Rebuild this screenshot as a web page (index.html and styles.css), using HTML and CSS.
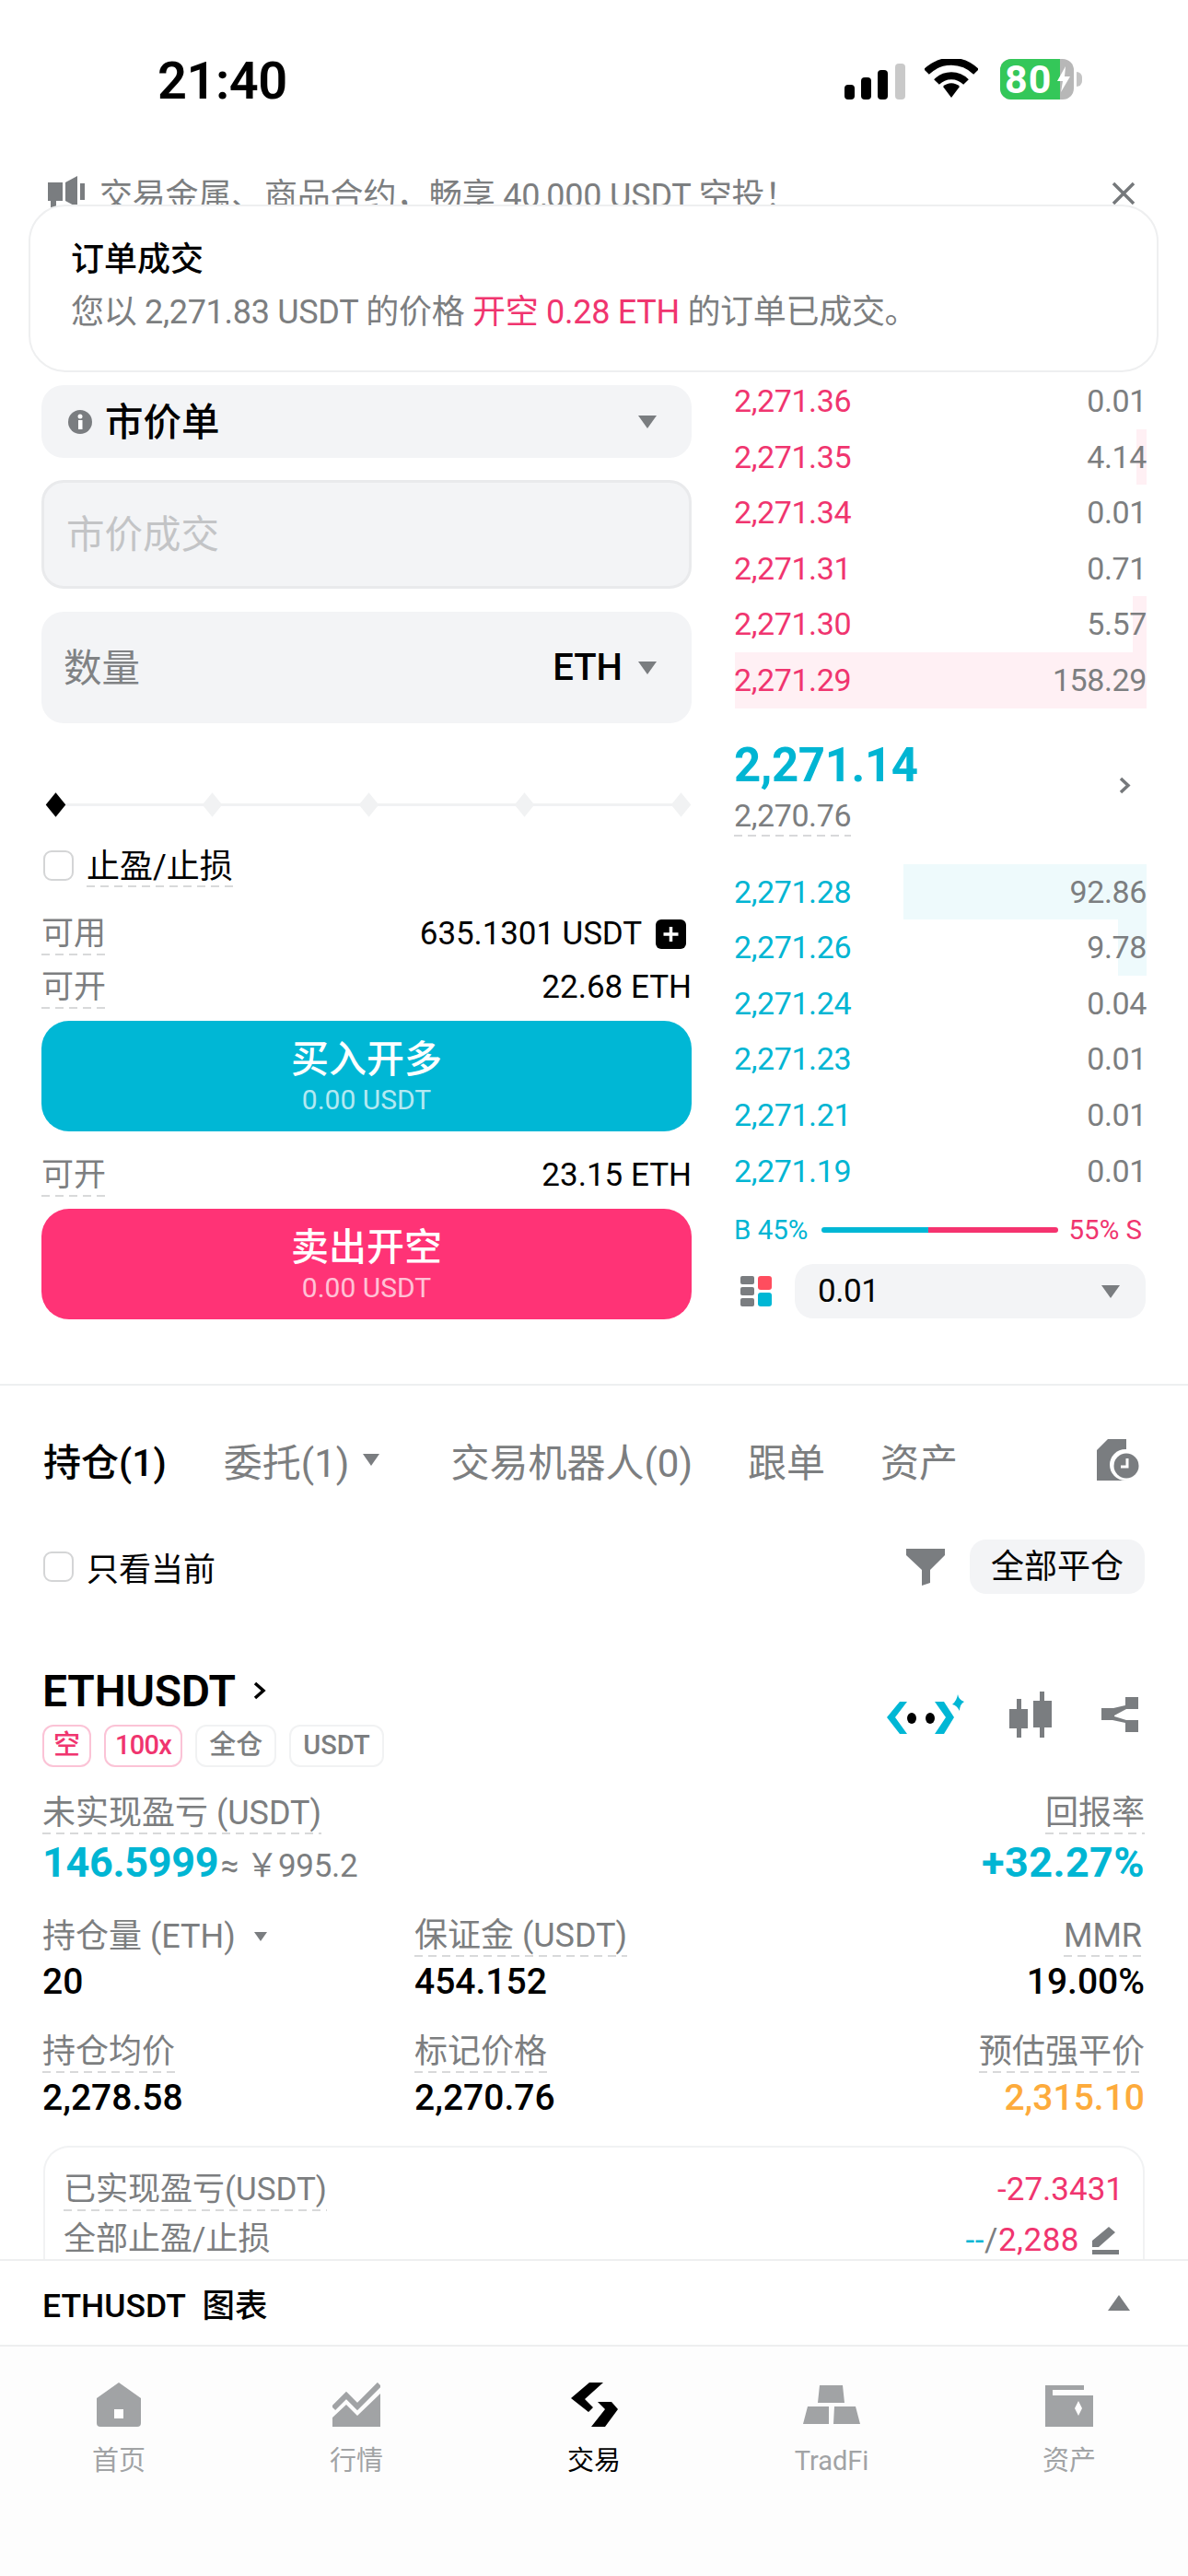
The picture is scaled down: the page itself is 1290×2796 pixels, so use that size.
FILE: index.html
```html
<!DOCTYPE html>
<html lang="zh-CN">
<head>
    <meta charset="UTF-8">
    <meta name="viewport" content="width=device-width, initial-scale=1.0">
    <title>ETHUSDT</title>
    <link rel="stylesheet" href="styles.css">
</head>
<body>
<div class="page">
    <div class="status">
        <div class="clock">21:40</div>
        <div class="status-icons">
            <svg class="signal" width="66" height="39" viewBox="0 0 66 39"><rect x="0" y="23" width="11" height="16" rx="4"/><rect x="18" y="15" width="11" height="24" rx="4"/><rect x="36" y="7" width="11" height="32" rx="4"/><rect x="55" y="0" width="11" height="39" rx="4" fill="#c9c9c9"/></svg>
            <svg class="wifi" width="58" height="42" viewBox="0 0 58 42"><path d="M2 14C17 -1 41 -1 56 14" fill="none" stroke="#000" stroke-width="8"/><path d="M13 25C22 16 36 16 45 25" fill="none" stroke="#000" stroke-width="8"/><path d="M20 30C25 25 33 25 38 30L29 42Z"/></svg>
            <div class="battery"><div class="battery-fill">80</div><svg class="bolt" width="14" height="28" viewBox="0 0 14 28"><path d="M9 0L0 16H6L4 28L14 11H8Z" fill="#fff"/></svg></div>
            <div class="battery-nub"></div>
        </div>
    </div>

    <div class="notice">
        <svg class="speaker" width="40" height="36" viewBox="0 0 40 36"><path d="M0 7H16V27H9V36H3V27H0ZM19 7L32 0V34L19 27ZM35 8H40V26H35Z" fill="#7a7d80"/></svg>
        <span class="notice-text">交易金属、商品合约，畅享 40,000 USDT 空投！</span>
        <svg class="close" width="26" height="26" viewBox="0 0 26 26"><path d="M2 2L24 24M24 2L2 24" stroke="#75787b" stroke-width="3.5"/></svg>
    </div>

    <div class="toast">
        <div class="toast-title">订单成交</div>
        <div class="toast-body">您以 2,271.83 USDT 的价格 <span class="pink">开空 0.28 ETH</span> 的订单已成交。</div>
    </div>

    <div class="trade">
        <div class="form">
            <div class="field field-select">
                <svg width="26" height="26" viewBox="0 0 26 26"><circle cx="13" cy="13" r="13" fill="#7a7d80"/><rect x="11" y="11" width="4.5" height="10" fill="#fff"/><circle cx="13" cy="7" r="2.5" fill="#fff"/></svg>
                <span class="select-name">市价单</span>
                <i class="caret caret-end"></i>
            </div>
            <div class="field field-input"><span class="cjk-up">市价成交</span></div>
            <div class="field field-qty">
                <span class="cjk-up">数量</span>
                <span class="unit">ETH</span>
                <i class="caret"></i>
            </div>
            <div class="slider">
                <i class="dot dot-on"></i><i class="dot"></i><i class="dot"></i><i class="dot"></i><i class="dot"></i>
            </div>
            <div class="check-row">
                <i class="check"></i>
                <span class="dash">止盈/止损</span>
            </div>
            <div class="info-row info-first">
                <span class="dash grey">可用</span>
                <span class="info-val">635.1301 USDT<svg class="plus" width="33" height="32" viewBox="0 0 33 32"><rect width="33" height="32" rx="6"/><path d="M16.500 8V24M8.500 16H24.500" stroke="#fff" stroke-width="3.500"/></svg></span>
            </div>
            <div class="info-row">
                <span class="dash grey">可开</span>
                <span>22.68 ETH</span>
            </div>
            <div class="btn btn-buy"><b>买入开多</b><small>0.00 USDT</small></div>
            <div class="info-row info-second">
                <span class="dash grey">可开</span>
                <span>23.15 ETH</span>
            </div>
            <div class="btn btn-sell"><b>卖出开空</b><small>0.00 USDT</small></div>
        </div>

        <div class="book">
            <div class="book-side asks">
                <div class="level"><span>2,271.36</span><span class="size">0.01</span></div>
                <div class="level"><i class="depth" style="width:11px"></i><span>2,271.35</span><span class="size">4.14</span></div>
                <div class="level"><span>2,271.34</span><span class="size">0.01</span></div>
                <div class="level"><span>2,271.31</span><span class="size">0.71</span></div>
                <div class="level"><i class="depth" style="width:15px"></i><span>2,271.30</span><span class="size">5.57</span></div>
                <div class="level"><i class="depth" style="width:447px"></i><span>2,271.29</span><span class="size">158.29</span></div>
            </div>
            <div class="mid">
                <div class="mid-price">2,271.14</div>
                <div class="mid-mark"><span class="dash">2,270.76</span></div>
                <svg class="mid-arrow" width="13" height="19" viewBox="0 0 13 19"><path d="M2 2L10 9.500L2 17" fill="none" stroke="#75787b" stroke-width="3.500"/></svg>
            </div>
            <div class="book-side bids">
                <div class="level"><i class="depth" style="width:264px"></i><span>2,271.28</span><span class="size">92.86</span></div>
                <div class="level"><i class="depth" style="width:31px"></i><span>2,271.26</span><span class="size">9.78</span></div>
                <div class="level"><span>2,271.24</span><span class="size">0.04</span></div>
                <div class="level"><span>2,271.23</span><span class="size">0.01</span></div>
                <div class="level"><span>2,271.21</span><span class="size">0.01</span></div>
                <div class="level"><span>2,271.19</span><span class="size">0.01</span></div>
            </div>
            <div class="ratio">
                <span class="cyan">B 45%</span>
                <div class="ratio-bar"><i class="ratio-buy" style="width:45%"></i><i class="ratio-sell"></i></div>
                <span class="pink">55% S</span>
            </div>
            <div class="depth-row">
                <svg width="34" height="33" viewBox="0 0 34 33"><rect x="0" y="0" width="15" height="9" rx="2" fill="#7a7d80"/><rect x="0" y="12" width="15" height="9" rx="2" fill="#7a7d80"/><rect x="0" y="24" width="15" height="9" rx="2" fill="#7a7d80"/><rect x="19" y="0" width="15" height="15" rx="3" fill="#ff4d5e"/><rect x="19" y="18" width="15" height="15" rx="3" fill="#00b7d5"/></svg>
                <div class="depth-select"><span>0.01</span><i class="caret"></i></div>
            </div>
        </div>
    </div>

    <div class="positions">
        <div class="tabs">
            <span class="tab tab-on">持仓(1)</span>
            <span class="tab tab-caret">委托(1)<i class="caret caret-sm"></i></span>
            <span class="tab">交易机器人(0)</span>
            <span class="tab">跟单</span>
            <span class="tab">资产</span>
            <svg class="history" width="48" height="45" viewBox="0 0 48 45"><path d="M12 0H32V45H0V12Z" fill="#7a7d80"/><circle cx="31" cy="28" r="17" fill="#fff"/><circle cx="32" cy="29" r="13.500" fill="#7a7d80"/><path d="M33 21V30H26" fill="none" stroke="#fff" stroke-width="3"/></svg>
        </div>
        <div class="filter-row">
            <i class="check"></i>
            <span class="filter-label">只看当前</span>
            <svg class="funnel" width="42" height="40" viewBox="0 0 42 40"><path d="M0 0H42V7L26 23V37L17 40V23L0 7Z" fill="#7a7d80"/></svg>
            <span class="close-all">全部平仓</span>
        </div>

        <div class="symbol-row">
            <span class="symbol">ETHUSDT</span>
            <svg class="symbol-arrow" width="14" height="20" viewBox="0 0 14 20"><path d="M2 2L11 10L2 18" fill="none" stroke="#000" stroke-width="3.500"/></svg>
            <div class="symbol-tools">
                <svg class="tool-robot" width="89" height="44" viewBox="0 0 89 44"><path d="M0 25L14 8H22L9 25L22 43H14Z" fill="#00b7d5"/><path d="M52 8H62L73 25L62 43H52L64 25Z" fill="#00b7d5"/><ellipse cx="27" cy="26" rx="5" ry="6"/><ellipse cx="47" cy="26" rx="5" ry="6"/><path d="M77 0Q78 6 84 8Q79 11 79 18Q76 12 71 11Q76 7 77 0Z" fill="#00b7d5"/></svg>
                <svg width="46" height="50" viewBox="0 0 46 50"><path d="M8 8H13V19H20V40H13V50H8V40H0V19H8ZM33 0H38V10H46V39H38V50H33V39H26V10H33Z" fill="#7a7d80"/></svg>
                <svg width="40" height="38" viewBox="0 0 40 38"><path d="M26 0H40V13H27L14 20V18V21L27 25H40V38H26V28L12 25H0V12H13L26 9Z" fill="#7a7d80"/></svg>
            </div>
        </div>
        <div class="tags">
            <span class="tag tag-pink">空</span>
            <span class="tag tag-pink tag-tight">100x</span>
            <span class="tag">全仓</span>
            <span class="tag">USDT</span>
        </div>

        <div class="pnl-row">
            <div class="metric">
                <span class="lbl dash">未实现盈亏 (USDT)</span>
                <div class="pnl-val"><span class="cyan big">146.5999</span><span class="approx">≈ ￥995.2</span></div>
            </div>
            <div class="metric metric-end">
                <span class="lbl dash">回报率</span>
                <div class="pnl-val"><span class="cyan big">+32.27%</span></div>
            </div>
        </div>
        <div class="metrics">
            <div class="metric">
                <span class="lbl">持仓量 (ETH)<i class="caret caret-xs"></i></span>
                <div class="val">20</div>
            </div>
            <div class="metric">
                <span class="lbl dash">保证金 (USDT)</span>
                <div class="val">454.152</div>
            </div>
            <div class="metric metric-end">
                <span class="lbl dash lbl-inset">MMR</span>
                <div class="val">19.00%</div>
            </div>
            <div class="metric">
                <span class="lbl dash">持仓均价</span>
                <div class="val">2,278.58</div>
            </div>
            <div class="metric">
                <span class="lbl dash">标记价格</span>
                <div class="val">2,270.76</div>
            </div>
            <div class="metric metric-end">
                <span class="lbl dash">预估强平价</span>
                <div class="val orange">2,315.10</div>
            </div>
        </div>

        <div class="tpsl-card">
            <div class="card-row">
                <span class="lbl dash">已实现盈亏(USDT)</span>
                <span class="pink">-27.3431</span>
            </div>
            <div class="card-row">
                <span class="lbl">全部止盈/止损</span>
                <span class="tp-val"><span class="cyan">--</span><span class="grey">/</span><span class="pink">2,288</span>
                    <svg width="35" height="30" viewBox="0 0 35 30"><path d="M22 0L29 6L11 22H4V15ZM4 25H33V30H4Z" fill="#7a7d80"/></svg>
                </span>
            </div>
        </div>
    </div>

    <div class="chart-bar">
        <span>ETHUSDT&nbsp; 图表</span>
        <i class="caret-up"></i>
    </div>

    <div class="nav">
        <div class="nav-item">
            <svg width="48" height="48" viewBox="0 0 48 48"><path d="M24 0L48 17V44Q48 48 44 48H4Q0 48 0 44V17Z" fill="#a1a3a5"/><rect x="19" y="29" width="10" height="10" fill="#fff"/></svg>
            <span>首页</span>
        </div>
        <div class="nav-item">
            <svg width="52" height="48" viewBox="0 0 52 48"><path d="M1 28L15 14L27 26L51 2" fill="none" stroke="#a1a3a5" stroke-width="6"/><path d="M0 38L15 24L27 36L52 12V48H0Z" fill="#a1a3a5"/></svg>
            <span>行情</span>
        </div>
        <div class="nav-item nav-on">
            <svg width="52" height="48" viewBox="0 0 52 48"><path d="M21 0H36L16 18L25 27L20 32L1 17ZM30 21H45L52 29L38 48H23L38 29Z"/></svg>
            <span>交易</span>
        </div>
        <div class="nav-item">
            <svg width="62" height="48" viewBox="0 0 62 48"><path d="M18 3H43L45 22H16ZM5 26H28V45H0ZM34 26H57L62 45H33Z" fill="#a1a3a5"/></svg>
            <span>TradFi</span>
        </div>
        <div class="nav-item">
            <svg width="52" height="48" viewBox="0 0 52 48"><path d="M0 3H42V8H8V14H52V48H0Z" fill="#a1a3a5"/><path d="M36 20L40 28L36 36L32 28Z" fill="#fff"/></svg>
            <span>资产</span>
        </div>
    </div>
</div>
</body>
</html>
```

FILE: styles.css
```css
* {
    box-sizing: border-box;
}

body {
    margin: 0;
    font-family: Roboto, "Noto Sans CJK SC", sans-serif;
    color: #000;
    background: #fff;
}

i {
    display: block;
    font-style: normal;
}

.page {
    position: relative;
    width: 1290px;
    height: 2796px;
    overflow: hidden;
    background: #fff;
}

.pink {
    color: #f0356f;
}

.cyan {
    color: #00b5d3;
}

.grey {
    color: #7c7e80;
}

.orange {
    color: #fdab3c;
}

/* dashed underline under labels, longer dashes than css dashed gives */
.dash {
    display: inline-block;
    background: repeating-linear-gradient(90deg, #d8d9da 0 9px, transparent 9px 15px) left bottom / 100% 2px no-repeat;
}

.caret {
    width: 0;
    height: 0;
    border-left: 10px solid transparent;
    border-right: 10px solid transparent;
    border-top: 14px solid #7a7d80;
}

.caret-sm {
    border-left-width: 9px;
    border-right-width: 9px;
    border-top-width: 13px;
    margin-left: 15px;
}

.caret-xs {
    border-left-width: 7px;
    border-right-width: 7px;
    border-top-width: 10px;
    margin-left: 20px;
}

.caret-end {
    margin-left: auto;
}

/* status bar */
.status {
    display: flex;
    justify-content: space-between;
    height: 180px;
    padding: 64px 115px 0 171px;
}

.clock {
    font-size: 56px;
    line-height: 48px;
    font-weight: 600;
    letter-spacing: -0.5px;
}

.status-icons {
    display: flex;
    align-items: flex-start;
    height: 44px;
}

.signal {
    margin-top: 5px;
}

.wifi {
    margin: 0 0 0 21px;
}

.battery {
    position: relative;
    display: flex;
    align-items: center;
    width: 80px;
    height: 44px;
    margin-left: 24px;
    border-radius: 12px;
    background: #b7b7b7;
}

.battery-fill {
    width: 65px;
    height: 44px;
    padding-left: 5px;
    border-radius: 12px 0 0 12px;
    background: #34c759;
    color: #fff;
    font-size: 43px;
    line-height: 44px;
    font-weight: 700;
    letter-spacing: 1px;
}

.bolt {
    position: absolute;
    left: 62px;
    top: 8px;
}

.battery-nub {
    width: 6px;
    height: 16px;
    margin: 14px 0 0 3px;
    border-radius: 0 6px 6px 0;
    background: #c4c4c4;
}

/* notice line, the toast lies over its lower half */
.notice {
    display: flex;
    align-items: flex-start;
    height: 60px;
    padding: 11px 57px 0 52px;
    color: #7c7e80;
    font-size: 36px;
    line-height: 50px;
}

.speaker {
    margin-top: 0;
}

.notice-text {
    margin: -3px 0 0 16px;
    letter-spacing: -0.2px;
}

.close {
    margin: 6px 0 0 auto;
}

.toast {
    position: absolute;
    left: 31px;
    top: 222px;
    width: 1227px;
    height: 182px;
    padding: 33px 44px 0;
    border: 2px solid #eeeff0;
    border-radius: 40px;
    background: #fff;
    z-index: 2;
}

.toast-title {
    font-size: 36px;
    line-height: 50px;
    font-weight: 500;
}

.toast-body {
    margin-top: 7px;
    color: #7c7e80;
    font-size: 36px;
    line-height: 50px;
    letter-spacing: -0.3px;
}

/* order form + book */
.trade {
    display: flex;
    justify-content: space-between;
    height: 1264px;
    padding: 165px 45px 0;
    border-bottom: 2px solid #eeeff0;
}

.form {
    width: 706px;
    padding-top: 13px;
}

.field {
    display: flex;
    align-items: center;
    border-radius: 24px;
    background: #f3f4f6;
    padding: 0 38px 0 26px;
    font-size: 40px;
}

.cjk-up {
    margin: -6px 0 0 -2px;
    font-size: 41.5px;
}

.field-select {
    height: 79px;
    padding-left: 29px;
}

.select-name {
    margin: -6px 0 0 14px;
    font-size: 41.5px;
    font-weight: 500;
}

.field-input {
    height: 118px;
    margin-top: 24px;
    border: 3px solid #e9eaec;
    color: #c3c4c6;
}

.field-qty {
    height: 121px;
    margin-top: 25px;
    color: #808284;
}

.unit {
    margin: 0 17px 0 auto;
    color: #000;
    font-weight: 500;
}

.slider {
    display: flex;
    justify-content: space-between;
    align-items: center;
    height: 24px;
    margin: 76px 3px 0 7px;
    background: linear-gradient(#f1f2f3, #f1f2f3) center / 100% 3px no-repeat;
}

.dot {
    width: 17px;
    height: 17px;
    transform: rotate(45deg) skew(6deg, 6deg);
    background: #f1f2f3;
}

.dot-on {
    background: #000;
}

.check-row {
    display: flex;
    align-items: flex-start;
    height: 45px;
    margin-top: 35px;
    font-size: 36px;
    line-height: 43px;
}

.check {
    flex: none;
    width: 33px;
    height: 33px;
    margin-right: 15px;
    border: 2px solid #d4d5d6;
    border-radius: 9px;
}

.check-row .check {
    margin: 3px 14px 0 2px;
}

.info-row {
    display: flex;
    justify-content: space-between;
    align-items: flex-start;
    height: 44px;
    margin-top: 14px;
    font-size: 35px;
    line-height: 42px;
}

.info-row .dash {
    height: 44px;
    width: 70px;
}

.info-first {
    margin-top: 28px;
}

.info-second {
    margin-top: 27px;
}

.info-val {
    display: flex;
    align-items: center;
    margin-right: 6px;
    letter-spacing: -0.1px;
}

.plus {
    margin-left: 15px;
}

.btn {
    display: flex;
    flex-direction: column;
    align-items: center;
    justify-content: center;
    height: 120px;
    margin-top: 13px;
    border-radius: 30px;
    color: #fff;
}

.btn b {
    font-size: 41px;
    line-height: 50px;
    font-weight: 500;
}

.btn small {
    margin-top: 2px;
    font-size: 30px;
    line-height: 34px;
    opacity: 0.7;
}

.btn-buy {
    background: #00b7d5;
}

.btn-sell {
    background: #ff3376;
}

.book {
    width: 448px;
    margin-left: 46px;
    font-size: 34px;
    letter-spacing: -0.4px;
}

.level {
    position: relative;
    display: flex;
    justify-content: space-between;
    height: 60.6px;
    line-height: 60px;
}

.level span {
    position: relative;
}

.size {
    color: #7c7e80;
}

.depth {
    position: absolute;
    top: 0;
    right: 0;
    bottom: 0;
}

.asks {
    color: #f0356f;
}

.asks .depth {
    background: #fff0f4;
}

.bids {
    color: #00b5d3;
}

.bids .depth {
    background: #eefafc;
}

.mid {
    position: relative;
    height: 169px;
    padding-top: 32px;
}

.mid-price {
    color: #00b5d3;
    font-size: 51px;
    line-height: 60px;
    font-weight: 700;
}

.mid-mark {
    color: #7c7e80;
    margin-top: 2px;
    line-height: 44px;
}

.mid-mark .dash {
    height: 45px;
}

.mid-arrow {
    position: absolute;
    right: 17px;
    top: 74px;
}

.ratio {
    display: flex;
    align-items: center;
    height: 36px;
    margin-top: 16px;
    font-size: 29.5px;
    letter-spacing: 0;
}

.ratio-bar {
    display: flex;
    width: 257px;
    height: 6px;
    margin: 0 11px 0 15px;
    border-radius: 3px;
    overflow: hidden;
}

.ratio-buy {
    background: #00b7d5;
}

.ratio-sell {
    flex: 1;
    background: #f5336f;
}

.depth-row {
    display: flex;
    align-items: center;
    margin-top: 19px;
    padding-left: 7px;
}

.depth-select {
    display: flex;
    justify-content: space-between;
    align-items: center;
    width: 381px;
    height: 59px;
    margin-left: 25px;
    padding: 0 28px 0 25px;
    border-radius: 20px;
    background: #f3f4f6;
    font-size: 35px;
}

/* positions */
.positions {
    height: 948px;
    padding: 50px 47px 0 46px;
}

.tabs {
    display: flex;
    align-items: center;
    gap: 60px;
    height: 60px;
    padding-left: 1px;
    color: #7c7e80;
    font-size: 42px;
}

.tab-on {
    margin-right: 2px;
    color: #000;
    font-size: 41px;
    font-weight: 500;
}

.tab-caret {
    display: flex;
    align-items: center;
    margin-right: 17px;
}

.history {
    margin-left: auto;
    margin-right: 4px;
}

.filter-row {
    display: flex;
    align-items: center;
    height: 59px;
    margin-top: 57px;
    font-size: 35px;
}

.filter-row .check {
    margin: 0 14px 0 1px;
}

.funnel {
    margin: 0 27px 0 auto;
}

.close-all {
    width: 190px;
    height: 59px;
    border-radius: 18px;
    background: #f3f4f6;
    text-align: center;
    font-size: 36px;
    line-height: 60px;
}

.symbol-row {
    display: flex;
    align-items: center;
    height: 54px;
    margin-top: 78px;
}

.symbol {
    font-size: 48px;
    font-weight: 600;
    letter-spacing: -0.2px;
}

.symbol-arrow {
    margin-left: 19px;
}

/* icons sit level with the tags, one row lower than the symbol */
.symbol-tools {
    display: flex;
    align-items: center;
    gap: 54px;
    margin: 52px 7px 0 auto;
}

.tool-robot {
    margin-right: -10px;
}

.tags {
    display: flex;
    gap: 14px;
    margin-top: 10px;
}

.tag {
    height: 46px;
    padding: 0 13px;
    border: 2px solid #f1f2f3;
    border-radius: 12px;
    color: #7c7e80;
    font-size: 29px;
    font-weight: 500;
    line-height: 41px;
}

.tag-pink {
    padding: 0 10px;
    border-color: #fbc3d6;
    color: #f0356f;
}

.tag-tight {
    letter-spacing: -0.7px;
}

.lbl {
    height: 44px;
    color: #7c7e80;
    font-size: 36px;
    line-height: 42px;
}

.lbl-inset {
    margin-right: 3px;
}

.pnl-row {
    display: flex;
    justify-content: space-between;
    margin-top: 29px;
}

.metric-end {
    text-align: right;
}

.pnl-val {
    margin-top: 8px;
    line-height: 46px;
}

.big {
    font-size: 45px;
    font-weight: 700;
    letter-spacing: -0.3px;
}

.metric-end .big {
    letter-spacing: 0.4px;
}

.approx {
    margin-left: 2px;
    color: #7c7e80;
    font-size: 35px;
    letter-spacing: -0.3px;
}

.metrics {
    display: grid;
    grid-template-columns: 404px 1fr auto;
    row-gap: 28px;
    margin-top: 25px;
}

.metrics .lbl:not(.dash) {
    display: flex;
    align-items: center;
}

.val {
    font-size: 39px;
    line-height: 54px;
    font-weight: 500;
}

/* open at the bottom, the chart bar cuts it off */
.tpsl-card {
    height: 123px;
    margin: 25px 0 0 1px;
    padding: 25px 21px 0 22px;
    border: 2px solid #f1f2f3;
    border-bottom: 0;
    border-radius: 28px 28px 0 0;
}

.card-row {
    display: flex;
    justify-content: space-between;
    height: 44px;
    margin-bottom: 10px;
    font-size: 35px;
    line-height: 42px;
}

.card-row .lbl {
    display: block;
    margin-left: -2px;
    font-size: 35px;
}

.tp-val {
    display: flex;
    align-items: center;
    letter-spacing: 0.5px;
}

.tp-val svg {
    margin: 0 3px 0 10px;
}

.chart-bar {
    display: flex;
    justify-content: space-between;
    align-items: center;
    height: 93px;
    padding: 0 63px 0 46px;
    border-top: 2px solid #eeeff0;
    font-size: 35.500px;
    font-weight: 500;
}

.caret-up {
    width: 0;
    height: 0;
    border-left: 12px solid transparent;
    border-right: 12px solid transparent;
    border-bottom: 17px solid #7a7d80;
}

.nav {
    display: grid;
    grid-template-columns: repeat(5, 258px);
    height: 251px;
    padding-top: 39px;
    border-top: 2px solid #eeeff0;
    background: #fdfdfd;
}

.nav-item {
    display: flex;
    flex-direction: column;
    align-items: center;
    height: 120px;
    color: #a1a3a5;
    font-size: 29px;
}

.nav-item span {
    margin-top: 18px;
    line-height: 38px;
}

.nav-on {
    color: #000;
}
```
